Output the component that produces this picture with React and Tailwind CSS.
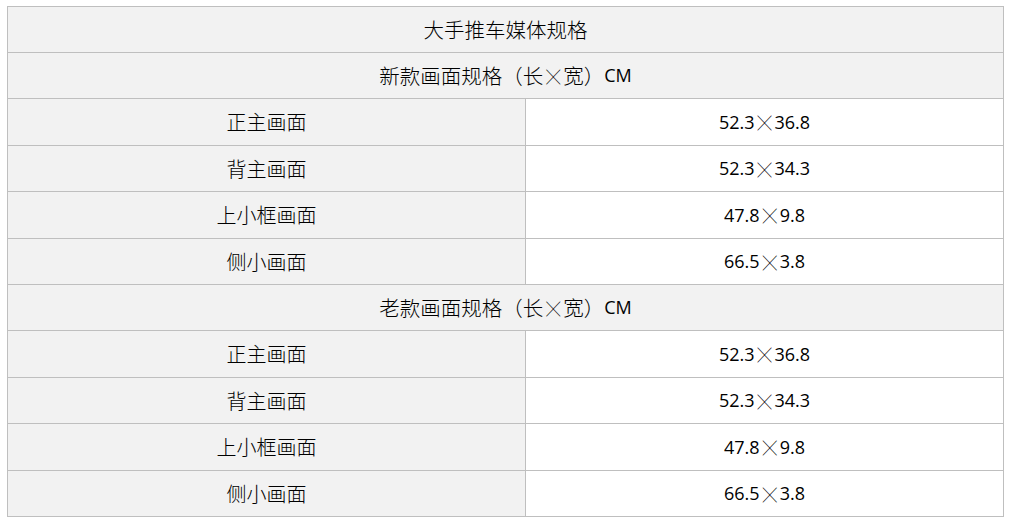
import React from "react";

const X = () => (
  <span className="inline-block w-[20px] text-center text-[14px] font-extralight leading-none [font-family:'Noto_Sans_CJK_SC',sans-serif]">
    ╳
  </span>
);

const sections = [
  {
    title: "新款画面规格（长",
    rows: [
      ["正主画面", "52.3", "36.8"],
      ["背主画面", "52.3", "34.3"],
      ["上小框画面", "47.8", "9.8"],
      ["侧小画面", "66.5", "3.8"],
    ],
  },
  {
    title: "老款画面规格（长",
    rows: [
      ["正主画面", "52.3", "36.8"],
      ["背主画面", "52.3", "34.3"],
      ["上小框画面", "47.8", "9.8"],
      ["侧小画面", "66.5", "3.8"],
    ],
  },
];

const heights = ["h-[46px]", "h-[47px]", "h-[46px]", "h-[47px]", "h-[46px]", "h-[46px]", "h-[47px]", "h-[46px]", "h-[47px]", "h-[46px]"];

export default function App() {
  const cjk = "[font-family:'Noto_Sans_CJK_SC',sans-serif]";
  let idx = 0;
  const rows = [];
  sections.forEach((s, si) => {
    const h = heights[idx++];
    rows.push(
      <div key={`h${si}`} className={`${h} border-t border-[#bfbfbf] bg-[#f2f2f2] flex items-center justify-center text-[20.5px] font-light text-black ${cjk}`}>
        <span>{s.title}</span>
        <X />
        <span>宽）</span>
        <span className="[font-family:'Open_Sans',sans-serif] font-normal text-[18px]">CM</span>
      </div>
    );
    s.rows.forEach((r, ri) => {
      const h2 = heights[idx++];
      rows.push(
        <div key={`r${si}-${ri}`} className={`${h2} border-t border-[#bfbfbf] flex`}>
          <div className={`w-[517px] bg-[#f2f2f2] flex items-center justify-center text-[20px] font-extralight text-black ${cjk}`}>
            {r[0]}
          </div>
          <div className="flex-1 border-l border-[#bfbfbf] bg-white flex items-center justify-center text-[18px] text-black [font-family:'Open_Sans',sans-serif]">
            <span>{r[1]}</span>
            <X />
            <span>{r[2]}</span>
          </div>
        </div>
      );
    });
  });

  return (
    <div className="w-[1011px] h-[523px] bg-white pt-[6px] pl-[7px]">
      <div className="w-[997px] border border-[#bfbfbf]">
        <div className={`h-[45px] bg-[#f2f2f2] flex items-center justify-center text-[20.5px] font-light text-black ${cjk}`}>
          大手推车媒体规格
        </div>
        {rows}
      </div>
    </div>
  );
}
